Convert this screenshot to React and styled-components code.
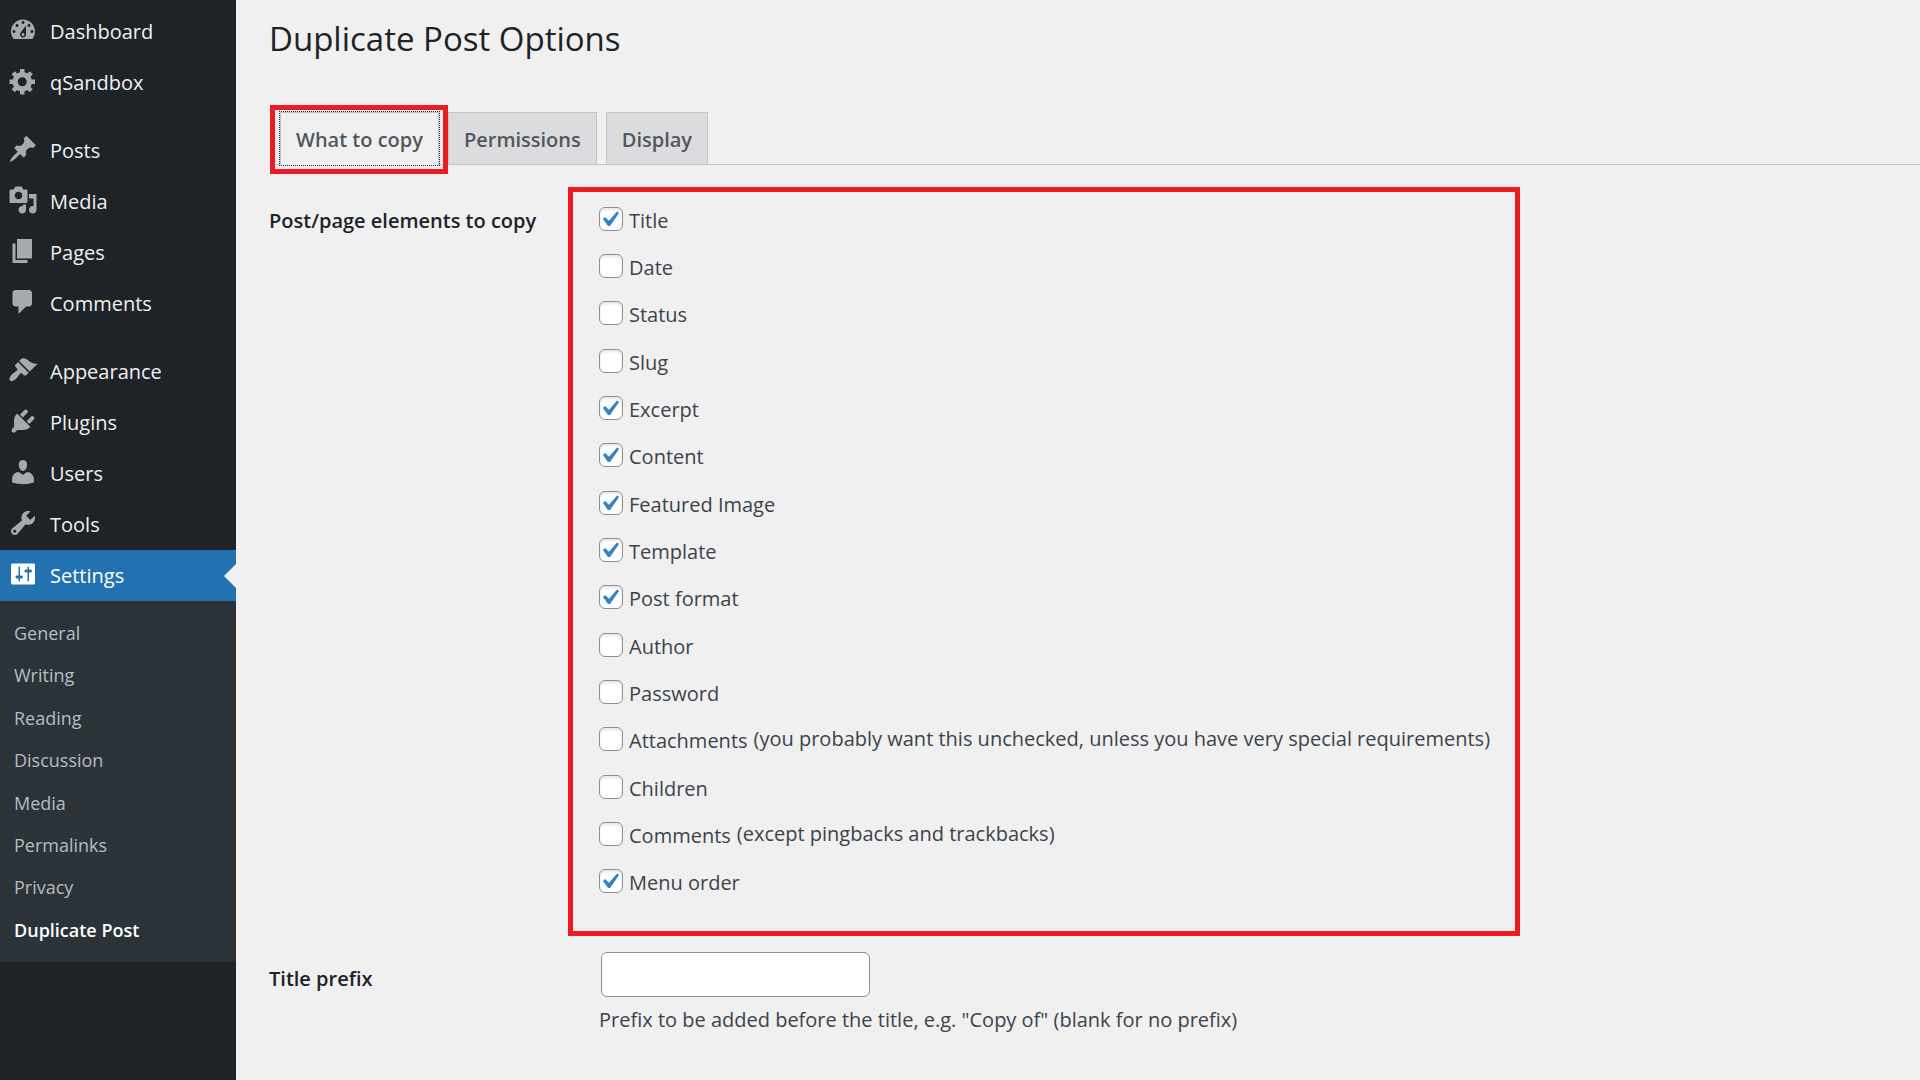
import React, { useState } from 'react'
import styled, { createGlobalStyle, css } from 'styled-components'

const GlobalStyle = createGlobalStyle`
  * {
    box-sizing: border-box;
  }
  body {
    margin: 0;
    background: #f0f0f1;
    color: #3c434a;
    font-family: 'Open Sans', 'Noto Sans', sans-serif;
    font-size: 20px;
    line-height: 30px;
  }
  ul {
    margin: 0;
    padding: 0;
    list-style: none;
  }
`

const Page = styled.div`
  display: flex;
  min-height: 100vh;
`

const Sidebar = styled.nav`
  flex: 0 0 236px;
  padding-top: 6px;
  background: #1d2327;
`

const MenuGroup = styled.ul`
  & + & {
    margin-top: 17px;
  }
`

const MenuLink = styled.a`
  position: relative;
  display: flex;
  gap: 12px;
  height: 51px;
  padding-left: 8px;
  line-height: 52px;
  color: ${props => (props.$current ? '#fff' : '#f0f0f1')};
  text-decoration: none;

  ${props => props.$current && css`
    background: #2271b1;

    &::after {
      content: '';
      position: absolute;
      top: 14px;
      right: 0;
      border: 12px solid transparent;
      border-left: 0;
      border-right-color: #f0f0f1;
    }
  `}
`

const MenuIcon = styled.svg`
  flex: none;
  width: 30px;
  height: 30px;
  margin-top: 9px;
  fill: ${props => (props.$current ? '#fff' : '#a7aaad')};
`

const Submenu = styled.ul`
  display: grid;
  grid-auto-rows: 1fr;
  min-height: 361px;
  padding: 11px 0;
  background: #2c3338;
`

const SubmenuLink = styled.a`
  display: block;
  padding-left: 14px;
  font-size: 18px;
  line-height: 42px;
  font-weight: ${props => (props.$current ? 600 : 400)};
  color: ${props => (props.$current ? '#fff' : '#b5bcc2')};
  text-decoration: none;
`

const Main = styled.main`
  flex: 1;
  min-width: 0;
  padding: 16px 0 32px 33px;
`

const Title = styled.h1`
  margin: 0 0 50px;
  font-size: 33px;
  font-weight: 400;
  line-height: 46px;
  color: #1d2327;
`

const Tabs = styled.div`
  display: flex;
  gap: 9px;
  padding-left: 11px;
  border-bottom: 1px solid #c3c4c7;
`

const Tab = styled.button`
  position: relative;
  padding: 9px 15px 6px;
  border: 1px solid #c3c4c7;
  border-bottom: 0;
  background: #dcdcde;
  color: #50575e;
  font: inherit;
  font-weight: 600;
  line-height: 36px;

  ${props => props.$active && css`
    margin-bottom: -1px;
    padding-bottom: 7px;
    background: #f0f0f1;
    outline: 1px dotted #1d2327;

    &::after {
      content: '';
      position: absolute;
      inset: -8px -10px -9px -11px;
      border: 5px solid #ed1c24;
    }
  `}
`

const Form = styled.form`
  display: grid;
  grid-template-columns: 299px 1fr;
  row-gap: 16px;
  margin-top: 22px;
`

const RowTitle = styled.div`
  padding-top: 19px;
  font-weight: 600;
  color: #1d2327;

  & ~ & {
    padding-top: 12px;
  }
`

const Options = styled.fieldset`
  width: 100%;
  max-width: 952px;
  min-width: 0;
  margin: 0;
  padding: 3px 12px 26px 26px;
  border: 5px solid #ed1c24;
`

const OptionList = styled.ul`
  display: grid;
  grid-auto-rows: 1fr;
  min-height: 710px;
`

const Option = styled.li`
  display: flex;
  align-items: center;
  gap: 6px;
`

const OptionLabel = styled.label`
  padding-top: 4px;
`

const Checkbox = styled.input.attrs({ type: 'checkbox' })`
  appearance: none;
  flex: none;
  width: 24px;
  height: 24px;
  margin: 0;
  border: 1px solid #8c8f94;
  border-radius: 6px;
  background: #fff no-repeat -6px -4px / 31px 31px;
  box-shadow: inset 0 2px 3px rgba(0, 0, 0, 0.1);

  &:checked {
    background-image: url("data:image/svg+xml,%3Csvg xmlns='http://www.w3.org/2000/svg' viewBox='0 0 20 20'%3E%3Cpath d='M14.83 4.89l1.34.94-5.81 8.38H9.02L5.78 9.67l1.34-1.25 2.57 2.4z' fill='%233582c4'/%3E%3C/svg%3E");
  }
`

const Field = styled.div`
  padding-left: 31px;
`

const TextInput = styled.input`
  display: block;
  width: 269px;
  height: 45px;
  margin: 0 2px;
  padding: 0 12px;
  border: 1px solid #8c8f94;
  border-radius: 6px;
  background: #fff;
  color: #2c3338;
  font: inherit;
`

const Description = styled.p`
  margin: 8px 0 0;
`

const icons = {
  dashboard: 'M3.76 16h12.48c1.1-1.37 1.76-3.11 1.76-5 0-4.42-3.58-8-8-8s-8 3.58-8 8c0 1.89.66 3.63 1.76 5zM10 4c.55 0 1 .45 1 1s-.45 1-1 1-1-.45-1-1 .45-1 1-1zM6 6c.55 0 1 .45 1 1s-.45 1-1 1-1-.45-1-1 .45-1 1-1zm8 0c.55 0 1 .45 1 1s-.45 1-1 1-1-.45-1-1 .45-1 1-1zm-5.37 5.55L12 7v6c0 1.1-.9 2-2 2s-2-.9-2-2c0-.57.24-1.08.63-1.45zM4 10c.55 0 1 .45 1 1s-.45 1-1 1-1-.45-1-1 .45-1 1-1zm12 0c.55 0 1 .45 1 1s-.45 1-1 1-1-.45-1-1 .45-1 1-1zm-5 3c0-.55-.45-1-1-1s-1 .45-1 1 .45 1 1 1 1-.45 1-1z',
  generic: 'M18 12h-2.18c-.17.7-.44 1.35-.81 1.93l1.54 1.54-2.1 2.1-1.54-1.54c-.58.36-1.23.63-1.91.79V19H8v-2.18c-.68-.16-1.33-.43-1.91-.79l-1.54 1.54-2.12-2.12 1.54-1.54c-.36-.58-.63-1.23-.79-1.91H1V9.03h2.17c.16-.7.44-1.35.8-1.94L2.43 5.55l2.1-2.1 1.54 1.54c.58-.37 1.24-.64 1.93-.81V2h3v2.18c.68.16 1.33.43 1.91.79l1.54-1.54 2.12 2.12-1.54 1.54c.36.59.64 1.24.8 1.94H18V12zm-8.5 1.5c1.66 0 3-1.34 3-3s-1.34-3-3-3-3 1.34-3 3 1.34 3 3 3z',
  post: 'M10.44 3.02l1.82-1.82 6.36 6.35-1.83 1.82c-1.05-.68-2.48-.57-3.41.36l-.75.75c-.92.93-1.04 2.35-.35 3.41l-1.83 1.82-2.41-2.41-2.8 2.79c-.42.42-3.38 2.71-3.8 2.29s1.86-3.39 2.28-3.81l2.79-2.79L4.1 9.36l1.83-1.82c1.05.69 2.48.57 3.4-.36l.75-.75c.93-.92 1.05-2.35.36-3.41z',
  media: 'M13 11V4c0-.55-.45-1-1-1h-1.67L9 1H5L3.67 3H2c-.55 0-1 .45-1 1v7c0 .55.45 1 1 1h10c.55 0 1-.45 1-1zM7 4.5c1.38 0 2.5 1.12 2.5 2.5S8.38 9.5 7 9.5 4.5 8.38 4.5 7 5.62 4.5 7 4.5zM14 6h5v10.5c0 1.38-1.12 2.5-2.5 2.5S14 17.88 14 16.5s1.12-2.5 2.5-2.5c.17 0 .34.02.5.05V9h-3V6zm-4 8.05V13h2v3.5c0 1.38-1.12 2.5-2.5 2.5S7 17.88 7 16.5 8.12 14 9.5 14c.17 0 .34.02.5.05z',
  page: 'M6 15V2h10v13H6zm-1 1h8v2H3V5h2v11z',
  comments: 'M5 2h9c1.1 0 2 .9 2 2v7c0 1.1-.9 2-2 2h-2l-5 5v-5H5c-1.1 0-2-.9-2-2V4c0-1.1.9-2 2-2z',
  appearance: 'M14.48 11.06L7.41 3.99l1.5-1.5c.5-.56 2.3-.47 3.51.32 1.21.8 1.43 1.28 2.91 2.1 1.18.64 2.45 1.26 4.45.85zm-.71.71L6.7 4.7 4.93 6.47c-.39.39-.39 1.02 0 1.41l1.06 1.06c.39.39.39 1.03 0 1.42-.6.6-1.43 1.11-2.21 1.69-.35.26-.7.53-1.01.84C1.43 14.23.4 16.08 1.4 17.07c.99 1 2.84-.03 4.18-1.36.31-.31.58-.66.85-1.02.57-.78 1.08-1.61 1.69-2.21.39-.39 1.02-.39 1.41 0l1.06 1.06c.39.39 1.02.39 1.41 0z',
  plugins: 'M13.11 4.36L9.87 7.6 8 5.73l3.24-3.24c.35-.34 1.05-.2 1.56.32.52.51.66 1.21.31 1.55zm-8 1.77l.91-1.12 9.01 9.01-1.19.84c-.71.71-2.63 1.16-3.82 1.16H6.14L4.9 17.26c-.59.59-1.54.59-2.12 0-.59-.58-.59-1.53 0-2.12l1.24-1.24v-3.88c0-1.13.4-3.19 1.09-3.89zm7.26 3.97l3.24-3.24c.34-.35 1.04-.21 1.55.31.52.51.66 1.21.31 1.55l-3.24 3.25z',
  users: 'M10 9.25c-2.27 0-2.73-3.44-2.73-3.44C7 4.02 7.82 2 9.97 2c2.16 0 2.98 2.02 2.71 3.81 0 0-.41 3.44-2.68 3.44zm0 2.57L12.72 10c2.39 0 4.52 2.33 4.52 4.53v2.49s-3.65 1.13-7.24 1.13c-3.65 0-7.24-1.13-7.24-1.13v-2.49c0-2.25 1.94-4.48 4.47-4.48z',
  tools: 'M16.68 9.77c-1.34 1.34-3.3 1.67-4.95.99l-5.41 6.52c-.99.99-2.59.99-3.58 0s-.99-2.59 0-3.57l6.52-5.42c-.68-1.65-.35-3.61.99-4.95 1.28-1.28 3.12-1.62 4.72-1.06l-2.89 2.89 2.82 2.82 2.86-2.87c.53 1.58.18 3.39-1.08 4.65zM3.81 16.21c.4.39 1.04.39 1.43 0 .4-.4.4-1.04 0-1.43-.39-.4-1.03-.4-1.43 0-.39.39-.39 1.03 0 1.43z',
  settings: 'M18 16V4c0-.55-.45-1-1-1H3c-.55 0-1 .45-1 1v12c0 .55.45 1 1 1h14c.55 0 1-.45 1-1zM8 11h1c.55 0 1 .45 1 1s-.45 1-1 1H8v1.5c0 .28-.22.5-.5.5s-.5-.22-.5-.5V13H6c-.55 0-1-.45-1-1s.45-1 1-1h1V5.5c0-.28.22-.5.5-.5s.5.22.5.5V11zm5-2h-1c-.55 0-1-.45-1-1s.45-1 1-1h1V5.5c0-.28.22-.5.5-.5s.5.22.5.5V7h1c.55 0 1 .45 1 1s-.45 1-1 1h-1v5.5c0 .28-.22.5-.5.5s-.5-.22-.5-.5V9z'
}

const menu = [
  [['Dashboard', 'dashboard'], ['qSandbox', 'generic']],
  [['Posts', 'post'], ['Media', 'media'], ['Pages', 'page'], ['Comments', 'comments']],
  [
    ['Appearance', 'appearance'],
    ['Plugins', 'plugins'],
    ['Users', 'users'],
    ['Tools', 'tools'],
    ['Settings', 'settings']
  ]
]

const submenu = [
  'General',
  'Writing',
  'Reading',
  'Discussion',
  'Media',
  'Permalinks',
  'Privacy',
  'Duplicate Post'
]

const tabs = ['What to copy', 'Permissions', 'Display']

const elements = [
  { name: 'Title', checked: true },
  { name: 'Date' },
  { name: 'Status' },
  { name: 'Slug' },
  { name: 'Excerpt', checked: true },
  { name: 'Content', checked: true },
  { name: 'Featured Image', checked: true },
  { name: 'Template', checked: true },
  { name: 'Post format', checked: true },
  { name: 'Author' },
  { name: 'Password' },
  {
    name: 'Attachments',
    note: '(you probably want this unchecked, unless you have very special requirements)'
  },
  { name: 'Children' },
  { name: 'Comments', note: '(except pingbacks and trackbacks)' },
  { name: 'Menu order', checked: true }
]

const slug = name => name.toLowerCase().replace(/ /g, '-')

const AdminMenu = () => (
  <Sidebar aria-label='Main menu'>
    {menu.map((group, i) => (
      <MenuGroup key={i}>
        {group.map(([name, icon]) => {
          const current = name === 'Settings'
          return (
            <li key={name}>
              <MenuLink href={`#${slug(name)}`} $current={current}>
                <MenuIcon viewBox='0 0 20 20' aria-hidden='true' $current={current}>
                  <path fillRule='evenodd' d={icons[icon]} />
                </MenuIcon>
                {name}
              </MenuLink>
              {current && (
                <Submenu>
                  {submenu.map(item => (
                    <li key={item}>
                      <SubmenuLink
                        href={`#settings-${slug(item)}`}
                        $current={item === 'Duplicate Post'}
                      >
                        {item}
                      </SubmenuLink>
                    </li>
                  ))}
                </Submenu>
              )}
            </li>
          )
        })}
      </MenuGroup>
    ))}
  </Sidebar>
)

const App = () => {
  const [activeTab, setActiveTab] = useState('What to copy')

  return (
    <Page>
      <GlobalStyle />
      <AdminMenu />
      <Main>
        <Title>Duplicate Post Options</Title>
        <Tabs role='tablist'>
          {tabs.map(tab => (
            <Tab
              key={tab}
              type='button'
              role='tab'
              aria-selected={tab === activeTab}
              $active={tab === activeTab}
              onClick={() => setActiveTab(tab)}
            >
              {tab}
            </Tab>
          ))}
        </Tabs>
        <Form>
          <RowTitle id='elements-title'>Post/page elements to copy</RowTitle>
          <Options aria-labelledby='elements-title'>
            <OptionList>
              {elements.map(({ name, checked, note }) => (
                <Option key={name}>
                  <Checkbox id={`copy-${slug(name)}`} defaultChecked={checked} />
                  <OptionLabel htmlFor={`copy-${slug(name)}`}>{name}</OptionLabel>
                  {note && <span>{note}</span>}
                </Option>
              ))}
            </OptionList>
          </Options>
          <RowTitle as='label' htmlFor='title-prefix'>Title prefix</RowTitle>
          <Field>
            <TextInput id='title-prefix' type='text' aria-describedby='title-prefix-help' />
            <Description id='title-prefix-help'>
              Prefix to be added before the title, e.g. "Copy of" (blank for no prefix)
            </Description>
          </Field>
        </Form>
      </Main>
    </Page>
  )
}

export default App
